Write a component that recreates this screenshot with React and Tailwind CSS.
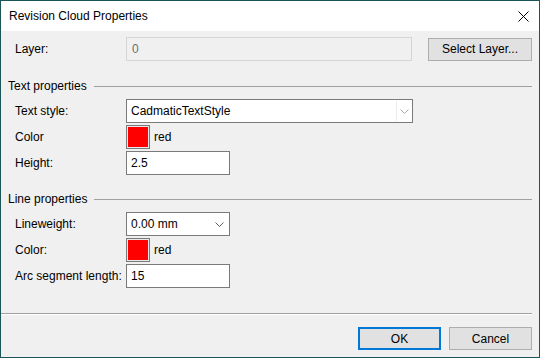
import React from "react";

const font = { fontFamily: '"Liberation Sans", Arial, sans-serif' };

function Chevron({ color }) {
  return (
    <svg width="9" height="5" viewBox="0 0 9 5" className="shrink-0">
      <polyline points="0.5,0.5 4.5,4.5 8.5,0.5" fill="none" stroke={color} strokeWidth="1" />
    </svg>
  );
}

function Row({ label, children }) {
  return (
    <div className="flex items-center h-[24px]">
      <div className="w-[125px] pl-[14px] shrink-0">{label}</div>
      {children}
    </div>
  );
}

function Heading({ text }) {
  return (
    <div className="flex items-center h-[14px] pl-[7px] pr-[7px]">
      <span>{text}</span>
      <div className="flex-1 h-px bg-[#a0a0a0] ml-[7px]" />
    </div>
  );
}

function Swatch() {
  return (
    <div className="flex items-center">
      <div className="w-[24px] h-[24px] border border-[#7a7a7a] p-[1px] bg-[#e8e8e8]">
        <div className="w-full h-full bg-[#ff0000]" />
      </div>
      <span className="ml-[4px]">red</span>
    </div>
  );
}

export default function App() {
  return (
    <div
      className="w-[540px] h-[358px] border border-[#1c5457] bg-[#f0f0f0] flex flex-col text-[12px] text-black leading-none"
      style={font}
    >
      <div className="h-[30px] bg-white flex items-center justify-between pl-[8px] pr-[10px] shrink-0">
        <span>Revision Cloud Properties</span>
        <svg width="11" height="11" viewBox="0 0 11 11">
          <path d="M0.5 0.5 L10.5 10.5 M10.5 0.5 L0.5 10.5" stroke="#000" strokeWidth="1" />
        </svg>
      </div>

      <div className="flex flex-col flex-1">
        <div className="mt-[6px] flex items-center h-[24px] pr-[7px]">
          <div className="w-[125px] pl-[14px] shrink-0">Layer:</div>
          <div className="w-[286px] h-[24px] border border-[#d5d5d5] bg-[#f0f0f0] flex items-center pl-[5px] text-[#6d6d6d]">
            0
          </div>
          <div className="ml-[16px] flex-1 h-[23px] border border-[#adadad] bg-[#e1e1e1] flex items-center justify-center">
            Select Layer...
          </div>
        </div>

        <div className="mt-[18px]">
          <Heading text="Text properties" />
        </div>

        <div className="mt-[6px] flex flex-col gap-[2px]">
          <Row label="Text style:">
            <div className="w-[287px] h-[24px] border border-[#7a7a7a] bg-white flex items-center">
              <span className="pl-[4px] flex-1">CadmaticTextStyle</span>
              <div className="w-px h-[20px] bg-[#ececec]" />
              <div className="w-[15px] flex justify-center">
                <Chevron color="#a8a8a8" />
              </div>
            </div>
          </Row>
          <Row label="Color">
            <Swatch />
          </Row>
          <Row label="Height:">
            <div className="w-[104px] h-[24px] border border-[#7a7a7a] bg-white flex items-center pl-[4px]">
              2.5
            </div>
          </Row>
        </div>

        <div className="mt-[17px]">
          <Heading text="Line properties" />
        </div>

        <div className="mt-[6px] flex flex-col gap-[2px]">
          <Row label="Lineweight:">
            <div className="w-[104px] h-[24px] border border-[#7a7a7a] bg-white flex items-center pl-[4px] pr-[5px] justify-between">
              <span>0.00 mm</span>
              <Chevron color="#606060" />
            </div>
          </Row>
          <Row label="Color:">
            <Swatch />
          </Row>
          <Row label="Arc segment length:">
            <div className="w-[104px] h-[24px] border border-[#7a7a7a] bg-white flex items-center pl-[4px]">
              15
            </div>
          </Row>
        </div>

        <div className="mt-[25px] pr-[7px]">
          <div className="h-px bg-[#a0a0a0]" />
          <div className="h-px bg-white" />
        </div>

        <div className="mt-[12px] flex justify-end gap-[8px] pr-[7px]">
          <div className="w-[83px] h-[23px] border-2 border-[#0078d7] bg-[#e1e1e1] flex items-center justify-center">
            OK
          </div>
          <div className="w-[83px] h-[23px] border border-[#adadad] bg-[#e1e1e1] flex items-center justify-center">
            Cancel
          </div>
        </div>
      </div>
    </div>
  );
}
